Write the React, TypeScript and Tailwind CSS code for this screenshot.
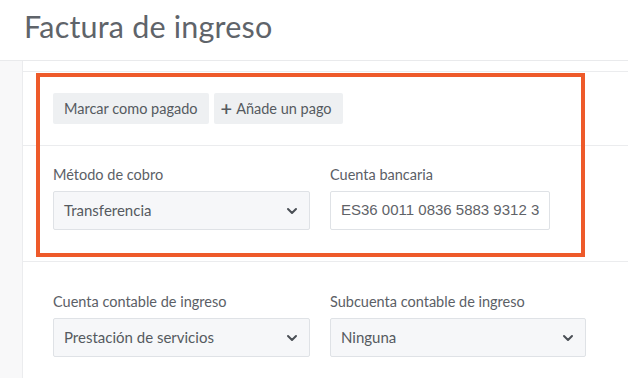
import React from 'react';

const font = { fontFamily: 'Lato, "Open Sans", sans-serif' };

function Chevron() {
  return (
    <svg width="12" height="8" viewBox="0 0 12 8" className="shrink-0">
      <path d="M2 2l4 4 4-4" fill="none" stroke="#4a4f55" strokeWidth="2" strokeLinecap="round" strokeLinejoin="round" />
    </svg>
  );
}

function Select({ value }: { value: string }) {
  return (
    <div className="h-[39px] flex items-center justify-between pl-[10px] pr-[11px] bg-[#f6f7f9] border border-[#dfe2e6] rounded-[2px] text-[15px] text-[#555a60]">
      <span>{value}</span>
      <Chevron />
    </div>
  );
}

function Field({ label, children }: { label: string; children: React.ReactNode }) {
  return (
    <div className="flex flex-col">
      <label className="text-[14.5px] leading-[20px] text-[#5b6066] mb-[6px]">{label}</label>
      {children}
    </div>
  );
}

export default function App() {
  return (
    <div className="relative w-[628px] h-[378px] overflow-hidden bg-white" style={font}>
      <header className="h-[61px] border-b border-[#e9eaec] px-[24px] flex items-center">
        <h1 className="text-[30.5px] leading-none text-[#5f646a] tracking-[0.2px] -mt-[8px]">Factura de ingreso</h1>
      </header>

      <div className="flex h-full">
        <div className="w-[22px] shrink-0 bg-[#f8f8f9]" />
        <main className="flex-1 border-l border-[#ebecee]">
          <div className="h-[11px] border-b border-[#ebecee]" />

          {/* pagos */}
          <section className="border-b border-[#ebecee] pl-[30px] pt-[21px] pb-[21px] flex gap-[5px]">
            <button className="h-[31px] px-[11px] bg-[#eef0f2] rounded-[2px] text-[14.5px] text-[#555a60]">
              Marcar como pagado
            </button>
            <button className="h-[31px] pl-[7px] pr-[11px] bg-[#eef0f2] rounded-[2px] text-[14.5px] text-[#555a60] flex items-center gap-[4px]">
              <span className="text-[20px] leading-none -mt-[2px] font-semibold">+</span>
              Añade un pago
            </button>
          </section>

          {/* cobro */}
          <section className="border-b border-[#ebecee] pl-[30px] pt-[19px] pb-[31px] flex gap-[20px]">
            <div className="w-[257px]">
              <Field label="Método de cobro">
                <Select value="Transferencia" />
              </Field>
            </div>
            <div className="w-[220px]">
              <Field label="Cuenta bancaria">
                <div className="h-[39px] flex items-center pl-[10px] bg-white border border-[#dfe2e6] rounded-[2px] overflow-hidden whitespace-nowrap text-[15px] text-[#5f6368]" style={{ fontFamily: '"Liberation Sans", Arial, sans-serif' }}>
                  ES36 0011 0836 5883 9312 3
                </div>
              </Field>
            </div>
          </section>

          {/* contabilidad */}
          <section className="pl-[30px] pt-[30px] flex gap-[20px]">
            <div className="w-[257px]">
              <Field label="Cuenta contable de ingreso">
                <Select value="Prestación de servicios" />
              </Field>
            </div>
            <div className="w-[256px]">
              <Field label="Subcuenta contable de ingreso">
                <Select value="Ninguna" />
              </Field>
            </div>
          </section>
        </main>
      </div>

      {/* anotación */}
      <div className="absolute left-[36px] top-[73px] w-[549px] h-[184px] border-[4.5px] border-[#ee5a2a] pointer-events-none" />
    </div>
  );
}
